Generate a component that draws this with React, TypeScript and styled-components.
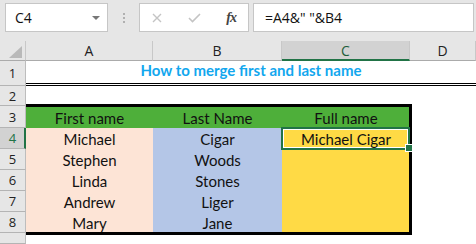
import React from 'react';
import styled, { createGlobalStyle, css } from 'styled-components';

const GlobalStyle = createGlobalStyle`
  * { box-sizing: border-box; }
  html, body { margin: 0; padding: 0; background: #fff; }
  body { width: 476px; height: 244px; overflow: hidden; }
`;

const UI_FONT = `"Open Sans", "Noto Sans", sans-serif`;
const CELL_FONT = `Lato, "Noto Sans", sans-serif`;
const GREEN = '#217346';

const Window = styled.div`
  width: 476px;
  height: 244px;
  display: flex;
  flex-direction: column;
  background: #e6e6e6;
  overflow: hidden;
`;

const FormulaBar = styled.div`
  height: 41px;
  display: flex;
  align-items: flex-start;
  padding: 3px 2px 0 5px;
`;

const Field = styled.div<{ $w?: number; $grow?: boolean }>`
  height: 29px;
  background: #fff;
  border: 1px solid #c6c6c6;
  display: flex;
  align-items: center;
  font-family: ${UI_FONT};
  font-size: 14px;
  color: #111;
  ${(p) => (p.$w ? `width: ${p.$w}px;` : '')}
  ${(p) => (p.$grow ? 'flex: 1;' : '')}
`;

const NameBox = styled(Field)`
  padding: 0 0 0 9px;
  justify-content: space-between;
`;

const Caret = styled.span`
  width: 0;
  height: 0;
  border-left: 4px solid transparent;
  border-right: 4px solid transparent;
  border-top: 4px solid #777;
  margin-right: 7px;
`;

const Grip = styled.div`
  width: 31px;
  height: 29px;
  display: flex;
  flex-direction: column;
  align-items: center;
  justify-content: center;
  gap: 2px;
  span {
    width: 2px;
    height: 2px;
    background: #b0b0b0;
  }
`;

const ButtonBox = styled(Field)`
  padding: 0 12px 0 12px;
  justify-content: space-between;
  margin-right: 4px;
`;

const Fx = styled.span`
  font-family: "Liberation Serif", serif;
  font-style: italic;
  font-weight: bold;
  font-size: 14px;
  color: #444;
  letter-spacing: -1px;
`;

const FormulaText = styled.span`
  padding-left: 11px;
  white-space: pre;
`;

const Sheet = styled.div`
  flex: 1;
  display: grid;
  grid-template-columns: 26px 127px 129px 128px 1fr;
  grid-template-rows: 20px 25px 20px 22px repeat(5, 21px) 1fr;
  background: #fff;
`;

const Corner = styled.div`
  background: #e6e6e6;
  border-right: 1px solid #c8c8c8;
  border-bottom: 1px solid #ababab;
  display: flex;
  align-items: flex-end;
  justify-content: flex-end;
  padding: 0 3px 2px 0;
`;

const ColHead = styled.div<{ $active?: boolean }>`
  background: ${(p) => (p.$active ? '#d2d2d2' : '#e6e6e6')};
  border-right: 1px solid #c8c8c8;
  border-bottom: ${(p) => (p.$active ? `2px solid ${GREEN}` : '1px solid #ababab')};
  display: flex;
  align-items: center;
  justify-content: center;
  padding-top: ${(p) => (p.$active ? '1px' : '0')};
  font-family: ${UI_FONT};
  font-size: 14px;
  color: ${(p) => (p.$active ? '#1d5e3a' : '#222')};
`;

const RowHead = styled.div<{ $active?: boolean }>`
  grid-column: 1;
  background: ${(p) => (p.$active ? '#d2d2d2' : '#e6e6e6')};
  border-right: ${(p) => (p.$active ? `2px solid ${GREEN}` : '1px solid #bdbdbd')};
  border-bottom: 1px solid #b4b4b4;
  display: flex;
  align-items: center;
  justify-content: center;
  padding-left: ${(p) => (p.$active ? '1px' : '0')};
  font-family: ${UI_FONT};
  font-size: 13px;
  color: ${(p) => (p.$active ? GREEN : '#222')};
  z-index: 2;
`;

const Title = styled.div`
  grid-column: 2 / 6;
  display: flex;
  align-items: flex-end;
  justify-content: center;
  padding-bottom: 4px;
  border-bottom: 3px double #000;
  font-family: ${CELL_FONT};
  font-weight: bold;
  font-size: 15px;
  color: #12a7ee;
`;

const Blank = styled.div<{ $col: string }>`
  grid-column: ${(p) => p.$col};
`;

const Table = styled.div`
  grid-column: 2 / 5;
  grid-row: 4 / 10;
  position: relative;
  display: grid;
  grid-template-columns: 127px 129px 128px;
  grid-template-rows: 22px repeat(5, 21px);
  &::after {
    content: '';
    position: absolute;
    inset: -2px -2px -2px 0;
    border: 3px solid #000;
    border-left: none;
    pointer-events: none;
  }
`;

const fills = {
  head: '#4eaf3a',
  first: '#fde4d6',
  last: '#b4c6e7',
  full: '#ffda45',
};

const Cell = styled.div<{ $fill: keyof typeof fills; $selected?: boolean }>`
  background: ${(p) => fills[p.$fill]};
  display: flex;
  align-items: flex-end;
  justify-content: center;
  padding-bottom: 1px;
  font-family: ${CELL_FONT};
  font-size: 15px;
  line-height: 18px;
  color: #111;
  position: relative;
  ${(p) =>
    p.$selected &&
    css`
      z-index: 3;
      &::before {
        content: '';
        position: absolute;
        inset: -1px 0 -1px -1px;
        border: 2px solid ${GREEN};
        box-shadow: inset 0 0 0 1px #fff;
      }
      &::after {
        content: '';
        position: absolute;
        right: -3px;
        bottom: -3px;
        width: 6px;
        height: 6px;
        background: ${GREEN};
        border: 1px solid #fff;
      }
    `}
`;

const CellText = styled.span`
  position: relative;
  z-index: 1;
`;

const rows = [
  ['Michael', 'Cigar', 'Michael Cigar'],
  ['Stephen', 'Woods', ''],
  ['Linda', 'Stones', ''],
  ['Andrew', 'Liger', ''],
  ['Mary', 'Jane', ''],
];

export default function App() {
  return (
    <>
      <GlobalStyle />
      <Window>
        <FormulaBar>
          <NameBox $w={103}>
            C4
            <Caret />
          </NameBox>
          <Grip>
            <span />
            <span />
            <span />
          </Grip>
          <ButtonBox $w={110}>
            <svg width="10" height="10" viewBox="0 0 10 10">
              <path d="M1 1L9 9M9 1L1 9" stroke="#c4c4c4" strokeWidth="1.4" />
            </svg>
            <svg width="13" height="10" viewBox="0 0 13 10">
              <path d="M1 5L4.5 8.5L12 1" stroke="#c4c4c4" strokeWidth="1.6" fill="none" />
            </svg>
            <Fx>fx</Fx>
          </ButtonBox>
          <Field $grow>
            <FormulaText>=A4&amp;" "&amp;B4</FormulaText>
          </Field>
        </FormulaBar>

        <Sheet>
          <Corner>
            <svg width="13" height="12" viewBox="0 0 13 12">
              <path d="M13 0L13 12L0 12Z" fill="#b9b9b9" />
            </svg>
          </Corner>
          <ColHead>A</ColHead>
          <ColHead>B</ColHead>
          <ColHead $active>C</ColHead>
          <ColHead>D</ColHead>

          <RowHead>1</RowHead>
          <Title>How to merge first and last name</Title>

          <RowHead>2</RowHead>
          <Blank $col="2 / 6" />

          <RowHead style={{ gridRow: 4 }}>3</RowHead>
          {rows.map((_, i) => (
            <RowHead key={i} $active={i === 0} style={{ gridRow: 5 + i }}>
              {4 + i}
            </RowHead>
          ))}
          <RowHead style={{ gridRow: 10 }} />

          <Table>
            <Cell $fill="head">First name</Cell>
            <Cell $fill="head">Last Name</Cell>
            <Cell $fill="head">Full name</Cell>
            {rows.map(([first, last, full], i) => (
              <React.Fragment key={first}>
                <Cell $fill="first">{first}</Cell>
                <Cell $fill="last">{last}</Cell>
                <Cell $fill="full" $selected={i === 0}>
                  <CellText>{full}</CellText>
                </Cell>
              </React.Fragment>
            ))}
          </Table>
        </Sheet>
      </Window>
    </>
  );
}
